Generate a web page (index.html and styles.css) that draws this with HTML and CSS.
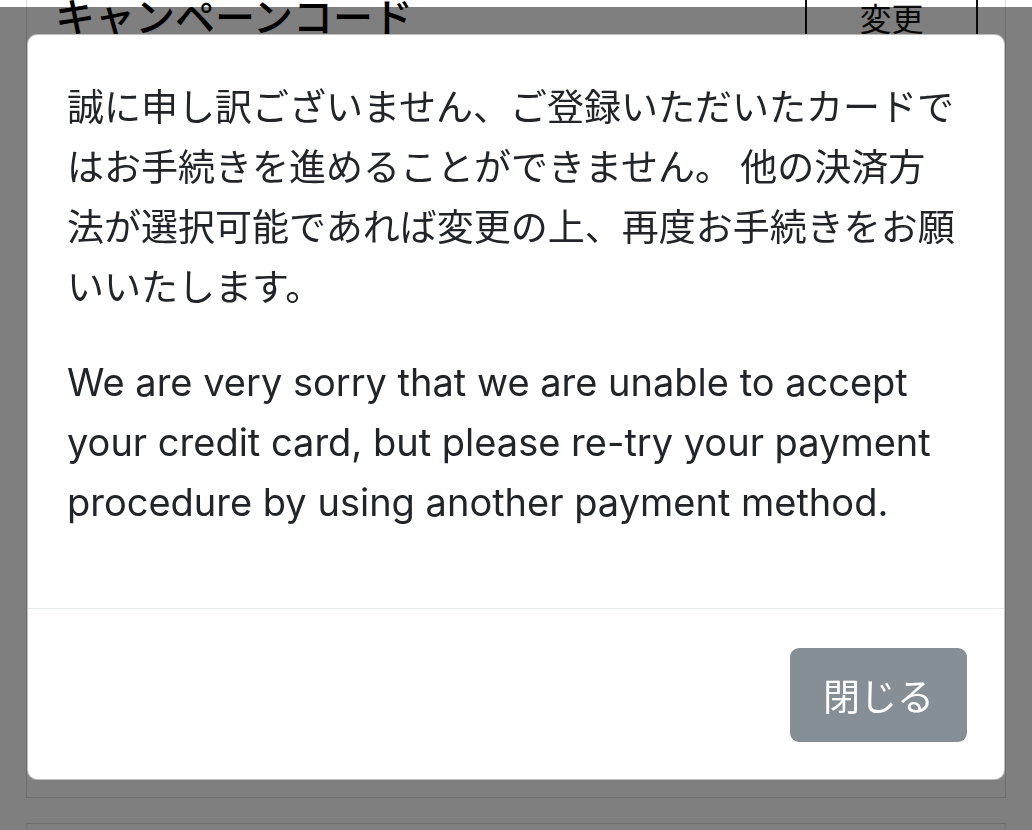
FILE: index.html
```html
<!DOCTYPE html>
<html lang="ja">
<head>
<meta charset="utf-8">
<title>カードエラー</title>
<link rel="stylesheet" href="styles.css">
</head>
<body>
<div class="page">
  <div class="card card-campaign">
    <div class="card-row">
      <span class="card-label">キャンペーンコード</span>
      <span class="btn-change">変更</span>
    </div>
  </div>
  <div class="card card-next"></div>
</div>
<div class="backdrop">
  <div class="modal">
    <div class="modal-body">
      <p class="msg-ja">誠に申し訳ございません、ご登録いただいたカードで<br>はお手続きを進めることができません。 他の決済方<br>法が選択可能であれば変更の上、再度お手続きをお願<br>いいたします。</p>
      <p class="msg-en">We are very sorry that we are unable to accept your credit card, but please re-try your payment procedure by using another payment method.</p>
    </div>
    <div class="modal-footer">
      <button class="btn-close" type="button">閉じる</button>
    </div>
  </div>
</div>
</body>
</html>
```

FILE: styles.css
```css
html, body {
  margin: 0;
  padding: 0;
  background: #ffffff;
  height: 100%;
  overflow: hidden;
}

body {
  font-family: "Noto Sans CJK JP", "Noto Sans", sans-serif;
  color: #000;
}

.page {
  padding: 0 26px;
  display: flex;
  flex-direction: column;
  gap: 25px;
  height: 100%;
  overflow: hidden;
}

.card {
  border: 1px solid #dcdcdc;
  background: #fff;
  flex: none;
}

.card-campaign {
  margin-top: -52px;
  height: 848px;
}

.card-next {
  height: 40px;
}

.card-row {
  display: flex;
  align-items: flex-end;
  justify-content: space-between;
  padding: 0 27px 0 28px;
  height: 96px;
}

.card-label {
  font-size: 40px;
  font-weight: 500;
  line-height: 60px;
  color: #000;
}

.btn-change {
  box-sizing: border-box;
  width: 173px;
  height: 64px;
  border-left: 2px solid #111;
  border-right: 2px solid #111;
  font-size: 32px;
  line-height: 62px;
  text-align: center;
  color: #111;
  margin-bottom: -5px;
}

.backdrop {
  position: fixed;
  top: 7px;
  left: 0;
  right: 0;
  bottom: 0;
  background: rgba(0, 0, 0, 0.5);
}

.modal {
  margin: 27px 27px 0 27px;
  background: #fff;
  border: 1px solid rgba(0, 0, 0, 0.25);
  border-radius: 10px;
  overflow: hidden;
  color: #212529;
}

.modal-body {
  padding: 40px 30px 39px 39px;
}

.modal-body p {
  margin: 0 0 37px 0;
  line-height: 60px;
}

.msg-ja {
  font-size: 37px;
  font-family: "Noto Sans CJK JP", sans-serif;
  white-space: nowrap;
}

.msg-en {
  font-size: 38px;
  font-family: Inter, "Liberation Sans", sans-serif;
  letter-spacing: 0;
}

.modal-footer {
  border-top: 1px solid #e9ecef;
  display: flex;
  justify-content: flex-end;
  padding: 39px 37px 37px 37px;
}

.btn-close {
  width: 177px;
  height: 94px;
  border: none;
  border-radius: 9px;
  background: #868e96;
  color: #ffffff;
  font-family: "Noto Sans CJK JP", sans-serif;
  font-size: 37px;
  padding: 0;
}
```
